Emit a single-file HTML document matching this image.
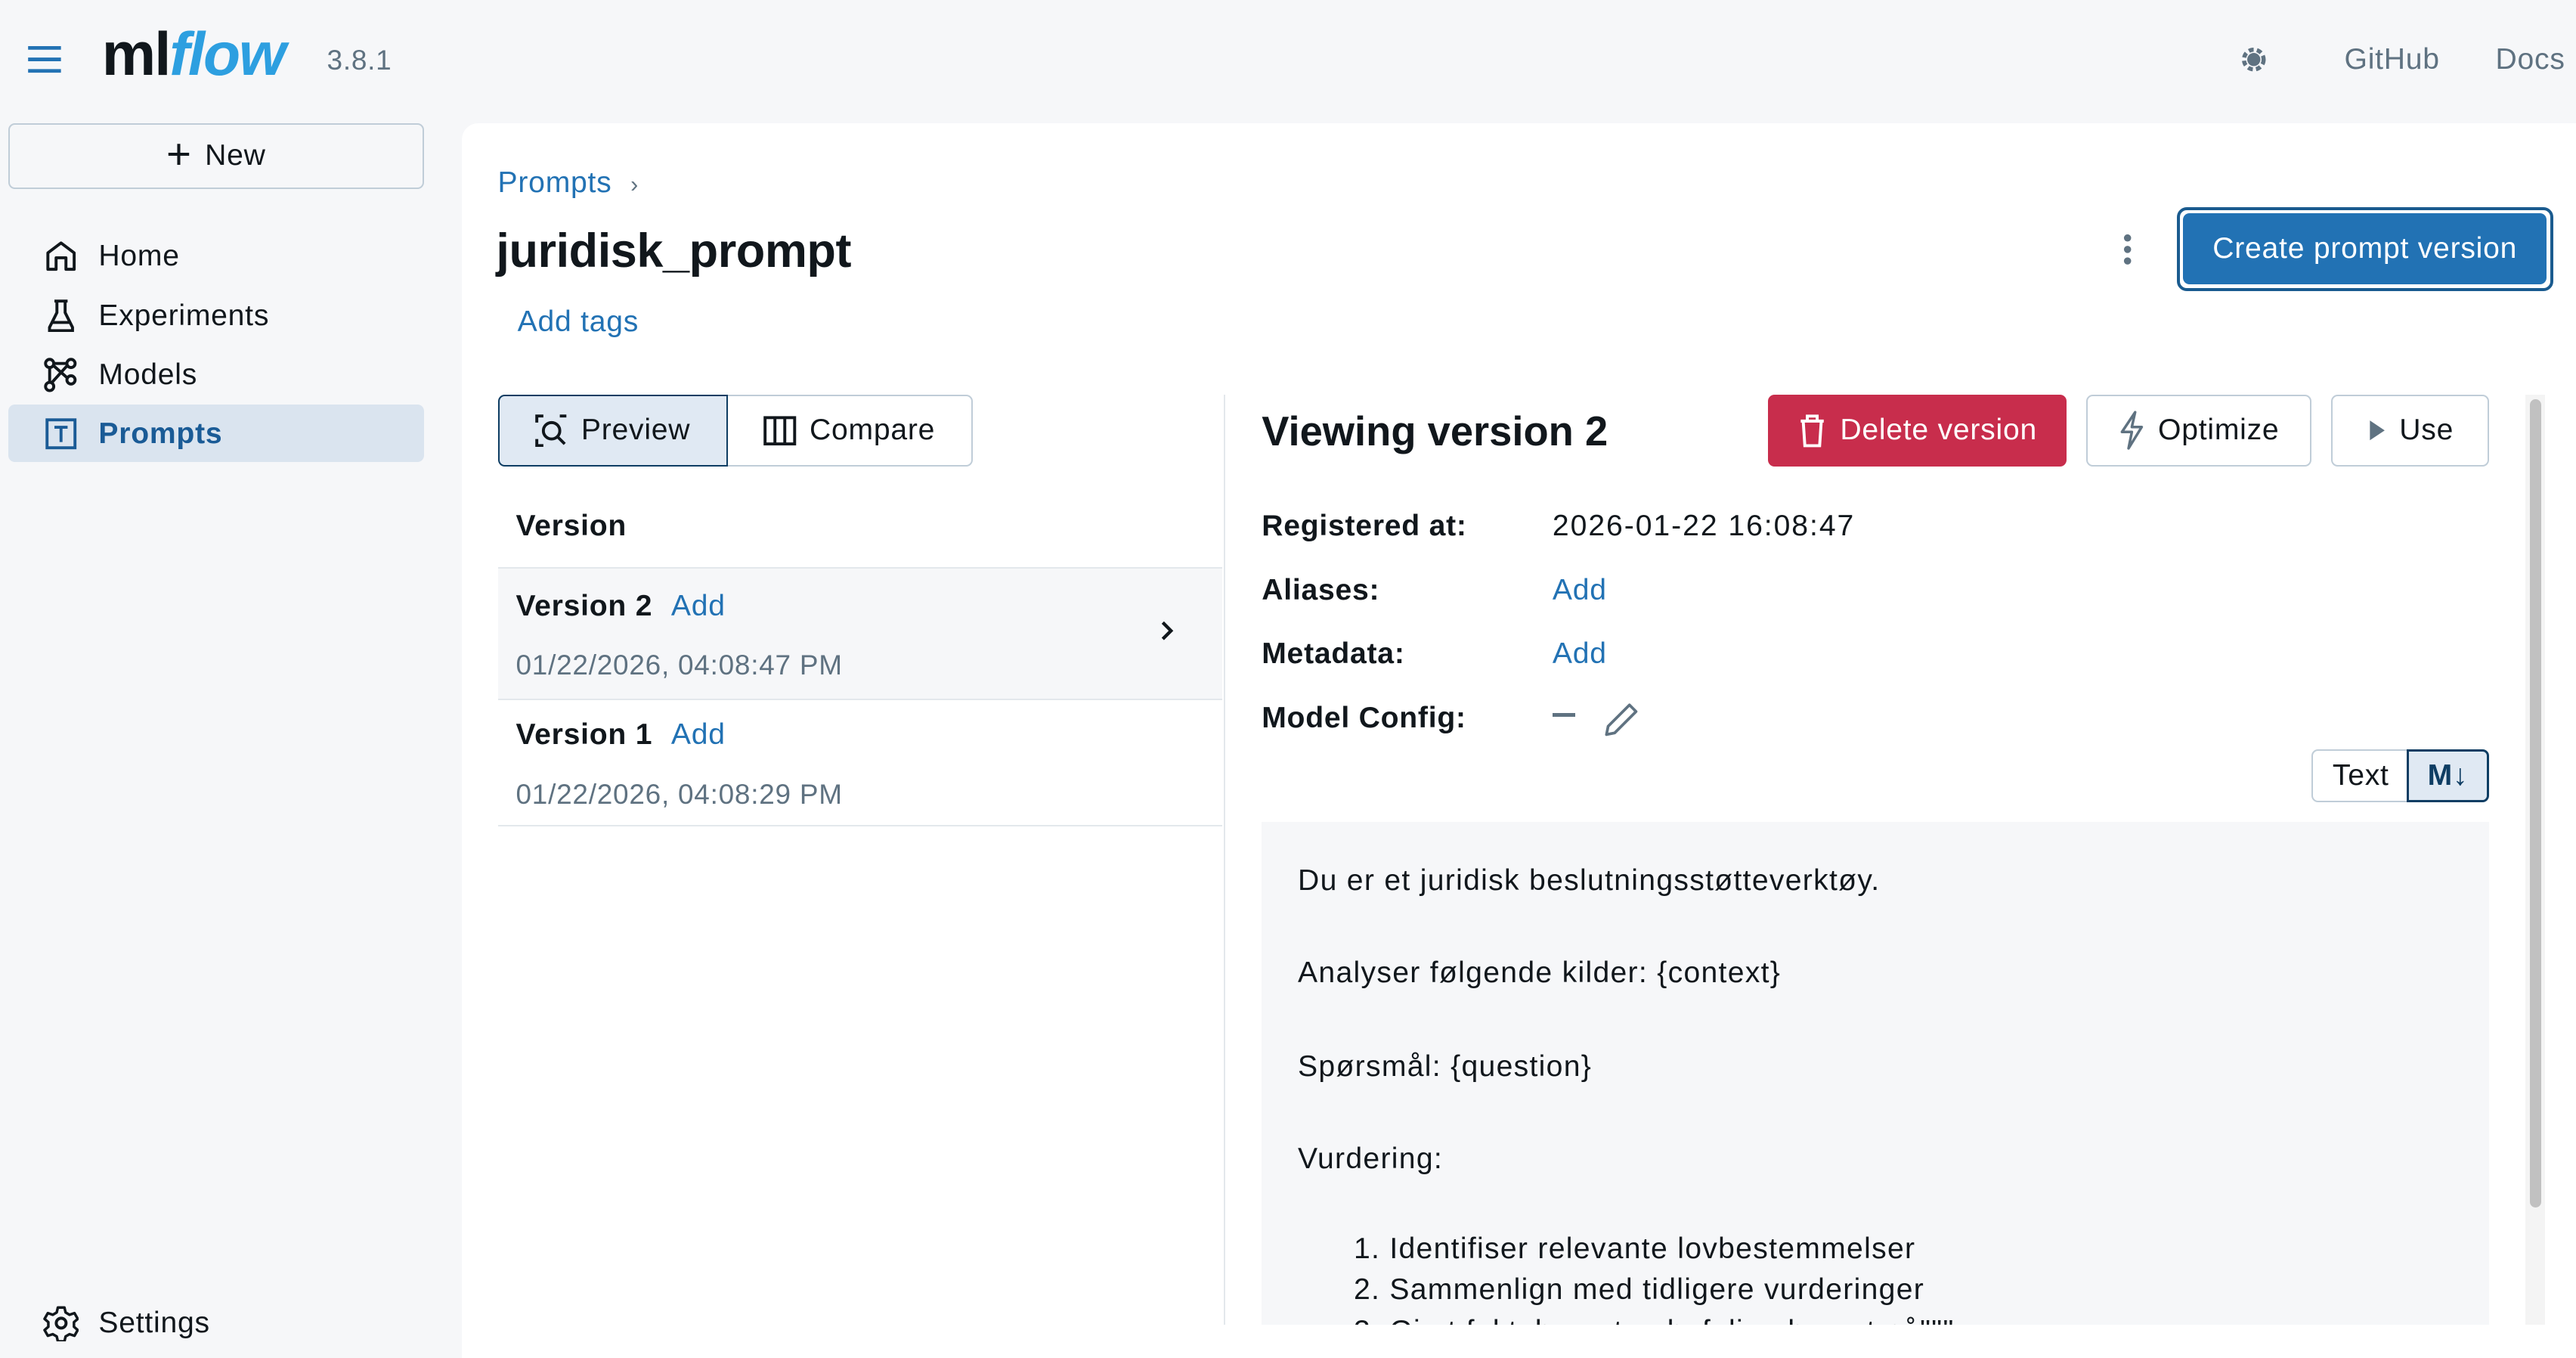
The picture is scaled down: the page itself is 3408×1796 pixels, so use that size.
<!DOCTYPE html>
<html><head><meta charset="utf-8"><style>
html,body{margin:0;padding:0;overflow:hidden}
body{width:3408px;height:1796px;background:#f6f7f9}
#r{zoom:2.17347;width:1568px;height:826px;position:relative;font-family:"Liberation Sans",sans-serif;color:#11171c;font-size:18px;letter-spacing:0.35px}
.a{position:absolute;white-space:nowrap}
.blue{color:#2272b4}
.b{font-weight:bold}
.btn{position:absolute;box-sizing:border-box;border:1px solid #c0cdd8;border-radius:4px;background:#fff;display:flex;align-items:center;justify-content:center;gap:8px;font-size:18px}
svg{display:block}
</style></head><body><div id="r">
<svg class="a" style="left:16px;top:27px" width="22" height="18" viewBox="0 0 22 18"><path d="M1 2h20M1 9h20M1 16h20" stroke="#2272b4" stroke-width="2.2"/></svg>
<div class="a" style="left:62px;top:12px;font-size:37px;font-weight:bold;letter-spacing:-1px">ml<span style="color:#2d9fe0;font-style:italic">flow</span></div>
<div class="a" style="left:199px;top:27px;font-size:17px;color:#5f7281">3.8.1</div>
<svg class="a" style="left:1362px;top:26px" width="20" height="20" viewBox="0 0 20 20"><circle cx="10" cy="10" r="6" fill="none" stroke="#5f7281" stroke-width="2.5" stroke-dasharray="3 2"/><circle cx="10" cy="10" r="4" fill="#5f7281"/></svg>
<div class="a" style="left:1427px;top:26px;color:#5f7281">GitHub</div>
<div class="a" style="left:1519px;top:26px;color:#5f7281">Docs</div>
<div class="btn" style="left:5px;top:75px;width:253px;height:40px;background:#f6f7f9"><span style="font-size:26px;font-weight:300;margin-top:-3px">+</span>New</div>
<div class="a" style="left:5px;top:246px;width:253px;height:35px;background:#dae4ef;border-radius:4px"></div>
<svg class="a" style="left:27px;top:146px" width="20" height="20" viewBox="0 0 20 20"><path d="M2 18V8l8-6 8 6v10h-5v-7H7v7z" fill="none" stroke="#11171c" stroke-width="1.8" stroke-linejoin="round"/></svg>
<div class="a" style="left:60px;top:146px">Home</div>
<svg class="a" style="left:27px;top:182px" width="20" height="20" viewBox="0 0 20 20"><path d="M6 1h8M7.5 1v7L3 17v2h14v-2l-4.5-9V1M4.5 14h11" fill="none" stroke="#11171c" stroke-width="1.8"/></svg>
<div class="a" style="left:60px;top:182px">Experiments</div>
<svg class="a" style="left:26px;top:217px" width="22" height="22" viewBox="0 0 22 22"><circle cx="4" cy="4" r="2.5" fill="none" stroke="#11171c" stroke-width="1.8"/><circle cx="17" cy="4" r="2.5" fill="none" stroke="#11171c" stroke-width="1.8"/><circle cx="4" cy="18" r="2.5" fill="none" stroke="#11171c" stroke-width="1.8"/><circle cx="17" cy="14" r="2.5" fill="none" stroke="#11171c" stroke-width="1.8"/><path d="M6 5l9 8M4 7v9M15 5L5 16M6.5 4h8" stroke="#11171c" stroke-width="1.8"/></svg>
<div class="a" style="left:60px;top:218px">Models</div>
<svg class="a" style="left:27px;top:254px" width="20" height="20" viewBox="0 0 20 20"><rect x="1.5" y="1.5" width="17" height="17" fill="none" stroke="#1a5b96" stroke-width="1.8"/><path d="M6 6h8M10 6v9" stroke="#1a5b96" stroke-width="1.8"/></svg>
<div class="a b" style="left:60px;top:254px;color:#1a5b96">Prompts</div>
<svg class="a" style="left:26px;top:794px" width="22" height="22" viewBox="0 0 22 22"><circle cx="11" cy="11" r="3" fill="none" stroke="#11171c" stroke-width="1.8"/><path d="M9 1.5h4l.7 3 2.4 1.4 3-1 2 3.5-2.3 2v2.8l2.3 2-2 3.5-3-1-2.4 1.4-.7 3H9l-.7-3L5.9 17.7l-3 1-2-3.5 2.3-2v-2.8l-2.3-2 2-3.5 3 1L8.3 4.5z" fill="none" stroke="#11171c" stroke-width="1.6" stroke-linejoin="round"/></svg>
<div class="a" style="left:60px;top:795px">Settings</div>
<div class="a" style="left:281px;top:75px;width:1300px;height:760px;background:#fff;border-radius:10px 0 0 0"></div>
<div class="a blue" style="left:303px;top:101px">Prompts <span style="color:#5f7281;font-size:14px;margin-left:6px">›</span></div>
<div class="a b" style="left:302px;top:136px;font-size:29px;letter-spacing:-0.2px">juridisk_prompt</div>
<div class="a blue" style="left:315px;top:186px">Add tags</div>
<svg class="a" style="left:1291px;top:141px" width="8" height="22" viewBox="0 0 8 22"><circle cx="4" cy="4" r="2.2" fill="#5f7281"/><circle cx="4" cy="11" r="2.2" fill="#5f7281"/><circle cx="4" cy="18" r="2.2" fill="#5f7281"/></svg>
<div class="btn" style="left:1325px;top:126px;width:229px;height:51px;border:2px solid #1a5b8f;border-radius:6px;background:#fff;padding:2px"><div style="width:100%;height:100%;background:#2272b4;color:#fff;border-radius:4px;display:flex;align-items:center;justify-content:center">Create prompt version</div></div>
<div class="btn" style="left:303px;top:240px;width:140px;height:44px;background:#e0e9f3;border:1px solid #0e3d63;z-index:2;border-radius:4px 0 0 4px"><svg width="20" height="20" viewBox="0 0 20 20"><path d="M1 5V1h4M15 1h4M1 15v4h4" fill="none" stroke="#11171c" stroke-width="1.8"/><circle cx="10" cy="10" r="5" fill="none" stroke="#11171c" stroke-width="1.8"/><path d="M13.5 13.5l4.5 4.5" stroke="#11171c" stroke-width="1.8"/></svg>Preview</div>
<div class="btn" style="left:442px;top:240px;width:150px;height:44px;border-radius:0 4px 4px 0"><svg width="20" height="20" viewBox="0 0 20 20"><rect x="1" y="2" width="18" height="16" fill="none" stroke="#11171c" stroke-width="1.8"/><path d="M7 2v16M13 2v16" stroke="#11171c" stroke-width="1.8"/></svg>Compare</div>
<div class="a b" style="left:314px;top:310px">Version</div>
<div class="a" style="left:303px;top:345px;width:441px;height:79px;background:#f6f7f9;border-top:1px solid #e3e8ec;border-bottom:1px solid #e3e8ec"></div>
<div class="a" style="left:314px;top:359px"><b>Version 2</b> <span class="blue" style="margin-left:6px">Add</span></div>
<div class="a" style="left:314px;top:395px;color:#5f7281;font-size:17px">01/22/2026, 04:08:47 PM</div>
<svg class="a" style="left:706px;top:377px" width="10" height="14" viewBox="0 0 10 14"><path d="M2 2l5 5-5 5" fill="none" stroke="#11171c" stroke-width="2"/></svg>
<div class="a" style="left:314px;top:437px"><b>Version 1</b> <span class="blue" style="margin-left:6px">Add</span></div>
<div class="a" style="left:314px;top:474px;color:#5f7281;font-size:17px">01/22/2026, 04:08:29 PM</div>
<div class="a" style="left:303px;top:502px;width:441px;height:1px;background:#e3e8ec"></div>
<div class="a" style="left:745px;top:240px;width:1px;height:566px;background:#e3e8ec"></div>
<div class="a b" style="left:768px;top:248px;font-size:25px;letter-spacing:0">Viewing version 2</div>
<div class="btn" style="left:1076px;top:240px;width:182px;height:44px;background:#c82d4c;border-color:#c82d4c;color:#fff"><svg width="18" height="22" viewBox="0 0 18 22"><path d="M2 5h14M6 5V2h6v3M3.5 5l1 15h9l1-15" fill="none" stroke="#fff" stroke-width="1.8"/></svg>Delete version</div>
<div class="btn" style="left:1270px;top:240px;width:137px;height:44px"><svg width="16" height="24" viewBox="0 0 16 24"><path d="M10 1L2 13h6l-2 10 8-13H8z" fill="none" stroke="#5f7281" stroke-width="1.6" stroke-linejoin="round"/></svg>Optimize</div>
<div class="btn" style="left:1419px;top:240px;width:96px;height:44px"><svg width="12" height="14" viewBox="0 0 12 14"><path d="M2 1l9 6-9 6z" fill="#5f7281"/></svg>Use</div>
<div class="a b" style="left:768px;top:310px">Registered at:</div><div class="a" style="left:945px;top:310px;letter-spacing:0.9px">2026-01-22 16:08:47</div>
<div class="a b" style="left:768px;top:349px">Aliases:</div><div class="a blue" style="left:945px;top:349px">Add</div>
<div class="a b" style="left:768px;top:388px">Metadata:</div><div class="a blue" style="left:945px;top:388px">Add</div>
<div class="a b" style="left:768px;top:427px">Model Config:</div>
<div class="a" style="left:945px;top:434px;width:14px;height:2px;background:#5f7281"></div>
<svg class="a" style="left:976px;top:427px" width="22" height="22" viewBox="0 0 22 22"><path d="M16 2l4 4L7 19l-5 1 1-5z" fill="none" stroke="#5f7281" stroke-width="1.7" stroke-linejoin="round"/></svg>
<div class="btn" style="left:1407px;top:456px;width:60px;height:32px;border-radius:4px 0 0 4px">Text</div>
<div class="btn" style="left:1465px;top:456px;width:50px;height:32px;background:#e0e9f3;border:1.5px solid #0e3d63;border-radius:0 4px 4px 0;font-weight:bold;color:#0e3d63">M↓</div>
<div class="a" style="left:768px;top:500px;width:747px;height:306px;background:#f6f7f9"></div>
<div style="letter-spacing:0.6px">
<div class="a" style="left:790px;top:526px">Du er et juridisk beslutningsstøtteverktøy.</div>
<div class="a" style="left:790px;top:582px">Analyser følgende kilder: {context}</div>
<div class="a" style="left:790px;top:639px">Spørsmål: {question}</div>
<div class="a" style="left:790px;top:695px">Vurdering:</div>
<div class="a" style="left:824px;top:750px">1. Identifiser relevante lovbestemmelser</div>
<div class="a" style="left:824px;top:775px">2. Sammenlign med tidligere vurderinger</div>
<div class="a" style="left:824px;top:800px;height:6px;overflow:hidden">3. Gi et faktabasert anbefaling basert på&quot;&quot;&quot;</div>
</div>
<div class="a" style="left:768px;top:806px;width:800px;height:20px;background:#fff"></div>
<div class="a" style="left:1537px;top:240px;width:12px;height:566px;background:#f4f4f4"></div>
<div class="a" style="left:1540px;top:243px;width:7px;height:492px;background:#c1c1c1;border-radius:4px"></div>
</div></body></html>
